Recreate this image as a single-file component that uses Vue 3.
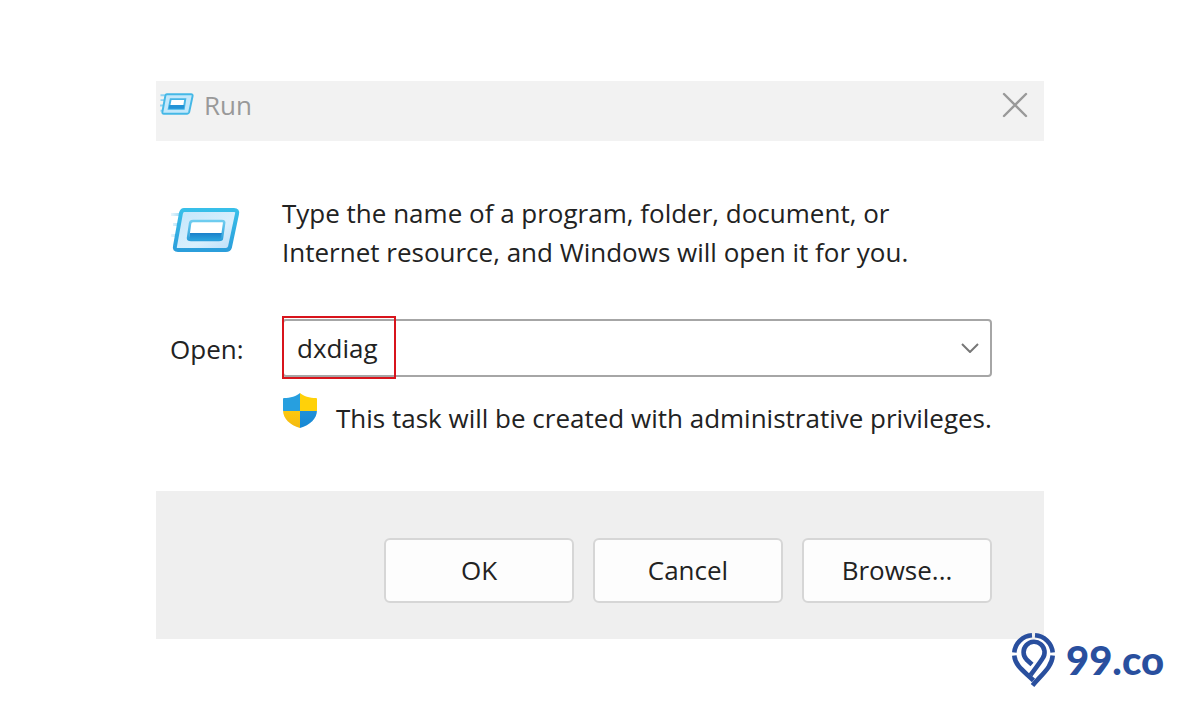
<script setup>
import { ref } from 'vue'

const command = ref('dxdiag')
const actions = ['OK', 'Cancel', 'Browse...']
</script>

<template>
  <main class="page">
    <section class="dialog" role="dialog" aria-labelledby="dialog-title">
      <header class="titlebar">
        <svg class="title-icon" viewBox="0 0 70 46" aria-hidden="true">
          <path d="M1 5h14M1 15h11M0 26h11M1 37h8" stroke="#8fd3f3" stroke-width="4" />
          <path d="M14 3h50q4 0 3 4l-7 33q-1 3-4 3H8q-4 0-3-4l6-33q1-3 3-3z" fill="#c3e8fb" stroke="#45b8e6" stroke-width="4" />
          <path d="M22 13h30l-3 20H18z" fill="#fff" stroke="#45b5e6" stroke-width="4" />
          <path d="M19 25h31l-1 8H18z" fill="#2493d6" />
        </svg>
        <h1 id="dialog-title">Run</h1>
        <button class="close" type="button" aria-label="Close">
          <svg viewBox="0 0 26 26" aria-hidden="true">
            <path d="M2 2l22 22M24 2L2 24" fill="none" stroke="#999" stroke-width="2.4" stroke-linecap="round" />
          </svg>
        </button>
      </header>

      <div class="body">
        <svg class="run-icon" viewBox="0 0 70 46" aria-hidden="true">
          <defs>
            <linearGradient id="edge" x1="0" y1="0" x2="0" y2="1">
              <stop offset="0" stop-color="#38bfe9" />
              <stop offset="1" stop-color="#2b9edb" />
            </linearGradient>
            <linearGradient id="panel" x1="0" y1="0" x2="1" y2="1">
              <stop offset="0" stop-color="#c3e6fb" />
              <stop offset="0.6" stop-color="#d8effd" />
              <stop offset="1" stop-color="#b9dcf8" />
            </linearGradient>
            <linearGradient id="rim" x1="0" y1="0" x2="0" y2="1">
              <stop offset="0" stop-color="#6fcdf0" />
              <stop offset="1" stop-color="#2a9fdb" />
            </linearGradient>
            <linearGradient id="bar" x1="0" y1="0" x2="0" y2="1">
              <stop offset="0" stop-color="#1a80ca" />
              <stop offset="1" stop-color="#2aa3dd" />
            </linearGradient>
            <linearGradient id="trail" gradientUnits="userSpaceOnUse" x1="0" y1="0" x2="14" y2="0">
              <stop offset="0" stop-color="#bfe6f8" stop-opacity="0.3" />
              <stop offset="1" stop-color="#7cc9ee" />
            </linearGradient>
          </defs>
          <path d="M1 6h12v3H1zM3 16h9v3H3zM1 27h9v3H1zM3 38h5v3H3z" fill="url(#trail)" />
          <path d="M14 3h50q4 0 3 4l-7 33q-1 3-4 3H8q-4 0-3-4l6-33q1-3 3-3z" fill="url(#panel)" stroke="url(#edge)" stroke-width="4" />
          <path d="M23 14h29q3 0 2 3l-2 14q0 2-3 2H21q-3 0-3-2l2-14q0-3 3-3z" fill="#fff" stroke="url(#rim)" stroke-width="2.5" />
          <path d="M20 26h32l-1 5q0 2-3 2H21q-2 0-2-2z" fill="url(#bar)" />
        </svg>
        <p class="message">
          Type the name of a program, folder, document, or<br />
          Internet resource, and Windows will open it for you.
        </p>

        <label class="open-label" for="command">Open:</label>
        <div class="combo">
          <input id="command" v-model="command" type="text" autocomplete="off" spellcheck="false" />
          <button class="drop" type="button" aria-label="Show recent commands">
            <svg viewBox="0 0 18 10" aria-hidden="true">
              <path d="M1 1l8 8 8-8" fill="none" stroke="#777" stroke-width="2" />
            </svg>
          </button>
          <span class="highlight" aria-hidden="true"></span>
        </div>

        <div class="notice">
          <svg viewBox="0 0 36 36" aria-hidden="true">
            <defs>
              <clipPath id="shield">
                <path d="M18 0C21 3 28 5 34 5Q35 5 35 6v11c0 9-7 15-17 18C8 32 1 26 1 17V6Q1 5 2 5C8 5 15 3 18 0z" />
              </clipPath>
              <linearGradient id="blue" x1="0" y1="0" x2="0" y2="1">
                <stop offset="0" stop-color="#2090d8" />
                <stop offset="1" stop-color="#1688d4" />
              </linearGradient>
              <linearGradient id="gold" x1="0" y1="0" x2="0" y2="1">
                <stop offset="0" stop-color="#fcc80e" />
                <stop offset="1" stop-color="#f3b912" />
              </linearGradient>
            </defs>
            <g clip-path="url(#shield)">
              <path d="M0 0h18v18H0z" fill="#279fdf" />
              <path d="M18 0h18v18H18z" fill="#ffd109" />
              <path d="M0 18h18v18H0z" fill="url(#gold)" />
              <path d="M18 18h18v18H18z" fill="url(#blue)" />
            </g>
          </svg>
          <span>This task will be created with administrative privileges.</span>
        </div>
      </div>

      <footer class="actions">
        <button v-for="action in actions" :key="action" type="button">{{ action }}</button>
      </footer>
    </section>

    <div class="brand">
      <svg viewBox="0 0 44 56" aria-hidden="true">
        <g fill="none" stroke="#294f9e" stroke-width="4.6">
          <path d="M3.300 20.500A19 19 0 0 1 21 3.300M24 3.300A19 19 0 0 1 41.700 20.500" />
          <path d="M3.300 23.500C4 34 14 40 22.500 48.500" />
          <path d="M41.700 23.500C41 35 31 42 21.500 53.500" />
          <path d="M21 32.500L15.500 27.500A10.500 10.500 0 1 1 31.500 26.500C28 32 24 37 19.500 43" />
        </g>
      </svg>
      <span>99.co</span>
    </div>
  </main>
</template>

<style>
body {
  margin: 0;
  background: #fff;
}
</style>

<style scoped>
.page {
  position: relative;
  box-sizing: border-box;
  min-height: 100vh;
  padding: 81px 13% 80px;
  color: #222;
  font-family: "Open Sans", "Noto Sans", sans-serif;
  font-size: 26px;
  line-height: 39px;
}
button,
input {
  box-sizing: border-box;
  margin: 0;
  padding: 0;
  border: 0;
  background: none;
  color: inherit;
  font: inherit;
}
svg {
  display: block;
}
.titlebar {
  display: flex;
  align-items: flex-start;
  box-sizing: border-box;
  height: 60px;
  padding: 5px 16px 0 4px;
  background: #f2f2f2;
}
.title-icon {
  width: 34px;
  height: 24px;
  margin: 6px 10px 0 0;
}
h1 {
  flex: 1;
  margin: 0;
  color: #999;
  font-size: 26px;
  font-weight: 400;
}
.close {
  padding: 6px 0;
}
.close svg {
  width: 26px;
  height: 26px;
}
.body {
  display: grid;
  grid-template-columns: 112px 1fr;
  padding: 53px 53px 53px 14px;
}
.run-icon {
  width: 70px;
  height: 46px;
  margin-top: 13px;
}
.message {
  margin: 0;
  white-space: nowrap;
}
.open-label {
  margin-top: 58px;
}
.combo {
  position: relative;
  display: flex;
  align-items: center;
  box-sizing: border-box;
  height: 58px;
  margin-top: 47px;
  border: 2px solid #a6a6a6;
  border-radius: 4px;
}
.combo input {
  flex: 1;
  min-width: 0;
  height: 100%;
  padding-left: 13px;
  outline: 0;
}
.drop {
  padding: 12px 11px;
}
.drop svg {
  width: 18px;
  height: 10px;
}
.highlight {
  position: absolute;
  top: -5px;
  left: -2px;
  box-sizing: border-box;
  width: 114px;
  height: 63px;
  border: 2px solid #d8141c;
  pointer-events: none;
}
.notice {
  grid-column: 2;
  display: flex;
  gap: 18px;
  margin-top: 16px;
  white-space: nowrap;
}
.notice svg {
  width: 36px;
  height: 36px;
}
.notice span {
  margin-top: 6px;
}
.actions {
  display: flex;
  justify-content: flex-end;
  gap: 19px;
  padding: 47px 52px 36px;
  background: #efefef;
}
.actions button {
  width: 190px;
  height: 65px;
  border: 2px solid #d6d6d6;
  border-radius: 6px;
  background: #fdfdfd;
}
.brand {
  position: absolute;
  right: 36px;
  bottom: 32px;
  display: flex;
  align-items: center;
  gap: 11px;
  color: #294f9e;
  font-family: Lato, sans-serif;
  font-size: 40px;
  font-weight: 900;
}
.brand svg {
  width: 44px;
  height: 56px;
}
</style>
